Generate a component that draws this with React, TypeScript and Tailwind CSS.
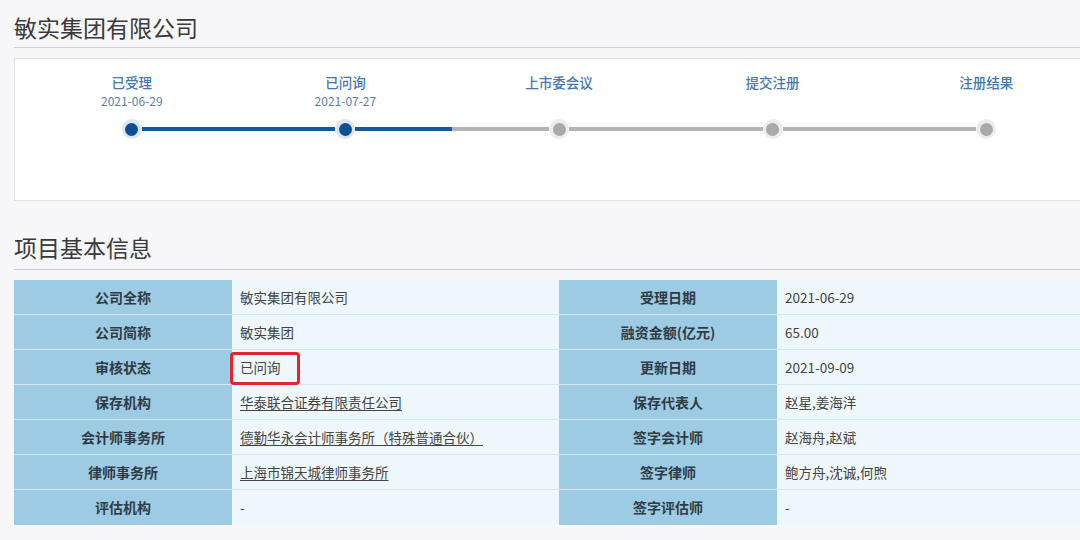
const steps = [
  { name: "已受理", date: "2021-06-29" },
  { name: "已问询", date: "2021-07-27" },
  { name: "上市委会议", date: "" },
  { name: "提交注册", date: "" },
  { name: "注册结果", date: "" },
];

// index of the last finished step
const current = 1;

const rows: { l1: string; v1: string; link1?: boolean; l2: string; v2: string; mark?: boolean }[] = [
  { l1: "公司全称", v1: "敏实集团有限公司", l2: "受理日期", v2: "2021-06-29" },
  { l1: "公司简称", v1: "敏实集团", l2: "融资金额(亿元)", v2: "65.00" },
  { l1: "审核状态", v1: "已问询", mark: true, l2: "更新日期", v2: "2021-09-09" },
  { l1: "保存机构", v1: "华泰联合证券有限责任公司", link1: true, l2: "保存代表人", v2: "赵星,姜海洋" },
  { l1: "会计师事务所", v1: "德勤华永会计师事务所（特殊普通合伙）", link1: true, l2: "签字会计师", v2: "赵海舟,赵斌" },
  { l1: "律师事务所", v1: "上海市锦天城律师事务所", link1: true, l2: "签字律师", v2: "鲍方舟,沈诚,何煦" },
  { l1: "评估机构", v1: "-", l2: "签字评估师", v2: "-" },
];

function Dot({ done }: { done: boolean }) {
  return (
    <div className={`w-[20px] h-[20px] rounded-full flex items-center justify-center shrink-0 ${done ? "bg-[#dde6f0]" : "bg-[#ececec]"}`}>
      <div className={`w-[13px] h-[13px] rounded-full ${done ? "bg-[#0d4f94]" : "bg-[#a9a9ab]"}`} />
    </div>
  );
}

function Label({ children }: { children: React.ReactNode }) {
  return (
    <div className="w-[218px] shrink-0 bg-[#9dcbe3] flex items-center justify-center font-bold text-[14px] text-[#2f3b44]">
      {children}
    </div>
  );
}

export default function App() {
  return (
    <div
      className="w-[1080px] h-[540px] overflow-hidden bg-[#f7f7f9] text-[#333]"
      style={{ fontFamily: '"Noto Sans CJK SC", "Noto Sans", sans-serif' }}
    >
      <div className="w-[1090px] ml-[14px]">
        {/* Title */}
        <h1 className="h-[48px] pt-[12px] text-[23px] leading-[30px] font-normal text-[#3a3a3a] border-b border-[#cfcfd3]">
          敏实集团有限公司
        </h1>

        {/* Progress card */}
        <div className="mt-[10px] h-[143px] bg-white border border-[#e3e3e6] px-[10px] pt-[12px]">
          <div className="grid grid-cols-5">
            {steps.map((s, i) => {
              const leftDone = i <= current && i > 0;
              const rightDone = i <= current;
              return (
                <div key={s.name} className="flex flex-col items-center">
                  <div className="h-[22px] text-[13.5px] leading-[22px] font-medium text-[#3f78b3]">{s.name}</div>
                  <div className="h-[16px] text-[12px] leading-[16px] text-[#5b7ea6]">{s.date}</div>
                  <div className="mt-[10px] w-full flex items-center">
                    <div className={`flex-1 h-[4px] ${i === 0 ? "bg-transparent" : leftDone ? "bg-[#15599c]" : "bg-[#b3b3b5]"}`} />
                    <Dot done={i <= current} />
                    <div className={`flex-1 h-[4px] ${i === steps.length - 1 ? "bg-transparent" : rightDone ? "bg-[#15599c]" : "bg-[#b3b3b5]"}`} />
                  </div>
                </div>
              );
            })}
          </div>
        </div>

        {/* Section heading */}
        <h2 className="mt-[32px] h-[37px] text-[23px] leading-[28px] font-normal text-[#3a3a3a] border-b border-[#c8c8cc]">
          项目基本信息
        </h2>

        {/* Info table */}
        <div className="mt-[10px]">
          {rows.map((r, i) => (
            <div
              key={r.l1}
              className={`flex h-[35px] ${i < rows.length - 1 ? "border-b border-[#d6e6ee]" : ""}`}
            >
              <Label>{r.l1}</Label>
              <div className="w-[327px] shrink-0 bg-[#eef7fb] flex items-center pl-[8px] text-[13.5px] text-[#444] relative">
                {r.link1 ? <span className="underline underline-offset-2">{r.v1}</span> : <span>{r.v1}</span>}
                {r.mark && (
                  <div className="absolute left-[-2px] top-[2px] w-[70px] h-[33px] border-[3px] border-[#e2262a] rounded-[4px]" />
                )}
              </div>
              <Label>{r.l2}</Label>
              <div className="flex-1 bg-[#eef7fb] flex items-center pl-[8px] text-[13.5px] text-[#444]">{r.v2}</div>
            </div>
          ))}
        </div>
      </div>
    </div>
  );
}
